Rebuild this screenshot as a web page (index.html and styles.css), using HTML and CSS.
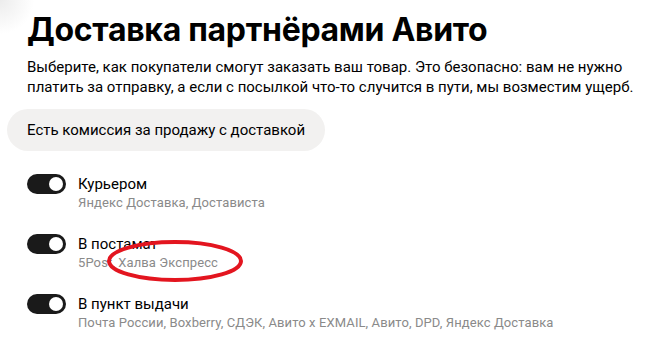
FILE: index.html
```html
<!DOCTYPE html>
<html lang="ru">
<head>
  <meta charset="UTF-8" />
  <title>Доставка партнёрами Авито</title>
  <link rel="stylesheet" href="styles.css">
</head>
<body>
  <main class="delivery">
    <h1>Доставка партнёрами Авито</h1>
    <p class="lead">Выберите, как покупатели смогут заказать ваш товар. Это безопасно: вам не нужно платить за отправку, а если с посылкой что-то случится в пути, мы возместим ущерб.</p>

    <div class="notice">Есть комиссия за продажу с доставкой</div>

    <ul class="options">
      <li class="option">
        <span class="toggle on"></span>
        <div class="option-text">
          <div class="option-title">Курьером</div>
          <div class="option-sub">Яндекс Доставка, Достависта</div>
        </div>
      </li>
      <li class="option">
        <span class="toggle on"></span>
        <div class="option-text">
          <div class="option-title">В постамат</div>
          <div class="option-sub">5Post, Халва Экспресс</div>
        </div>
        <svg class="mark" width="140" height="50" viewBox="0 0 140 50">
          <ellipse cx="70" cy="24" rx="66" ry="19" fill="none" stroke="#e3151f" stroke-width="4" />
        </svg>
      </li>
      <li class="option">
        <span class="toggle on"></span>
        <div class="option-text">
          <div class="option-title">В пункт выдачи</div>
          <div class="option-sub">Почта России, Boxberry, СДЭК, Авито x EXMAIL, Авито, DPD, Яндекс Доставка</div>
        </div>
      </li>
    </ul>
  </main>
</body>
</html>
```

FILE: styles.css
```css
* { box-sizing: border-box; margin: 0; padding: 0; }
html, body { height: 100%; }
body {
  font-family: Roboto, "Noto Sans", sans-serif;
  background: radial-gradient(circle at 0 0, #ececec, #fff 34px) #fff no-repeat;
  color: #000;
  overflow: hidden;
}
.delivery {
  padding: 10px 10px 0 27px;
}
h1 {
  font-family: Inter, "Noto Sans", sans-serif;
  font-size: 32px;
  font-weight: 700;
  line-height: 40px;
  letter-spacing: -0.3px;
}
.lead {
  margin-top: 7px;
  font-size: 15px;
  line-height: 20px;
}
.notice {
  display: inline-block;
  margin: 12px 0 0 -20px;
  padding: 0 20px;
  height: 42px;
  line-height: 42px;
  border-radius: 21px;
  background: #f2f1f0;
  font-size: 15px;
}
.options {
  list-style: none;
  margin-top: 23px;
}
.option {
  position: relative;
  display: flex;
  align-items: flex-start;
  gap: 12px;
  height: 60px;
}
.toggle {
  position: relative;
  flex: none;
  width: 39px;
  height: 20px;
  border-radius: 10px;
  background: #1a1a1a;
}
.toggle::after {
  content: "";
  position: absolute;
  top: 3px;
  right: 3px;
  width: 14px;
  height: 14px;
  border-radius: 50%;
  background: #fff;
}
.option-title {
  font-size: 15px;
  line-height: 20px;
}
.option-sub {
  margin-top: 1px;
  font-size: 13px;
  line-height: 16px;
  letter-spacing: 0.1px;
  color: #8a8a8a;
}
/* пометка от руки поверх скриншота */
.mark {
  position: absolute;
  left: 78px;
  top: 3px;
}
```
